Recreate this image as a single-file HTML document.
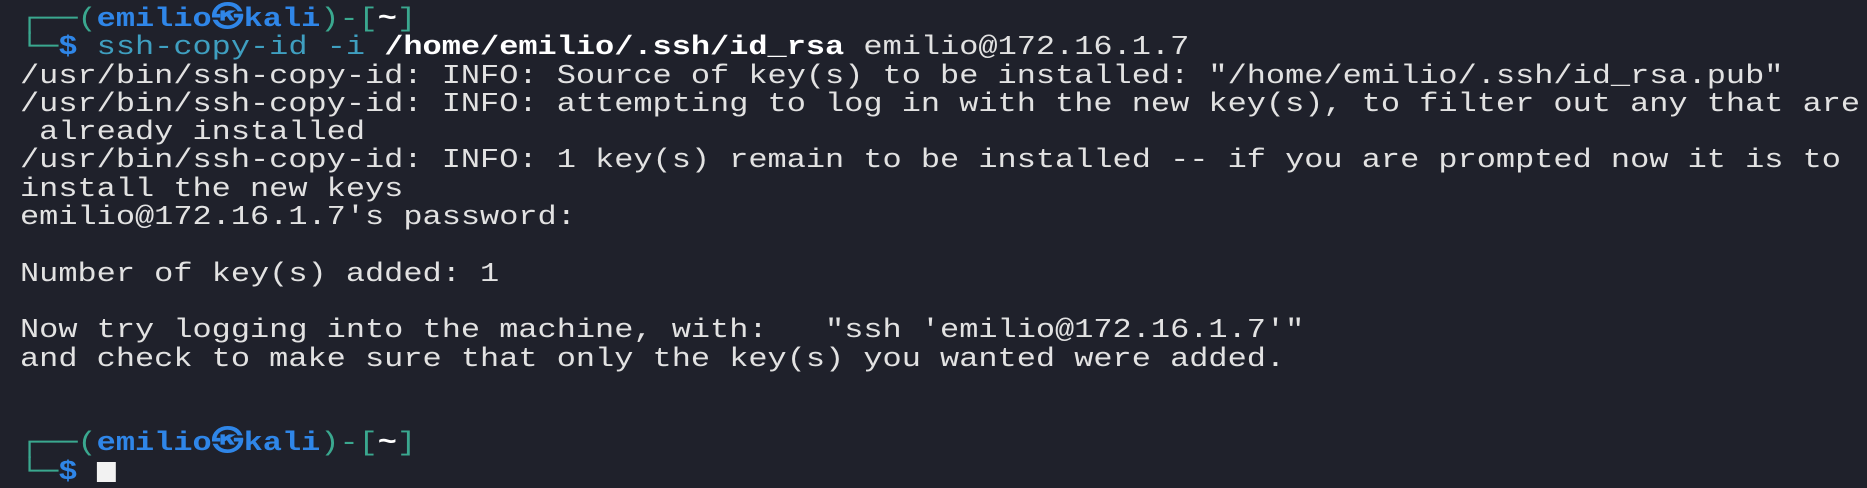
<!DOCTYPE html>
<html><head><meta charset="utf-8"><style>
html,body{margin:0;padding:0;background:#1f212b;width:1867px;height:469px;overflow:hidden}
.t{position:absolute;left:20px;top:6px;font-family:"Liberation Mono","DejaVu Sans Mono",monospace;font-size:27px;line-height:28.3px;color:#e2e2e2;white-space:pre;transform:scaleX(1.183);transform-origin:0 0}
.g{color:#3aa88f}.b{color:#2f86e8;font-weight:bold}.c{color:#3f9fc0}.w{color:#fff;font-weight:bold}
.cur{display:inline-block;width:16px;height:20px;background:#f2f2f2;vertical-align:-3px}
</style></head><body>
<div class="t"><span class="g">┌──(</span><span class="b">emilio㉿kali</span><span class="g">)-[</span><span class="w">~</span><span class="g">]</span>
<span class="g">└─</span><span class="b">$</span> <span class="c">ssh-copy-id</span> <span class="c">-i</span> <span class="w">/home/emilio/.ssh/id_rsa</span> emilio@172.16.1.7
/usr/bin/ssh-copy-id: INFO: Source of key(s) to be installed: "/home/emilio/.ssh/id_rsa.pub"
/usr/bin/ssh-copy-id: INFO: attempting to log in with the new key(s), to filter out any that are
 already installed
/usr/bin/ssh-copy-id: INFO: 1 key(s) remain to be installed -- if you are prompted now it is to
install the new keys
emilio@172.16.1.7's password: 

Number of key(s) added: 1

Now try logging into the machine, with:   "ssh 'emilio@172.16.1.7'"
and check to make sure that only the key(s) you wanted were added.


<span class="g">┌──(</span><span class="b">emilio㉿kali</span><span class="g">)-[</span><span class="w">~</span><span class="g">]</span>
<span class="g">└─</span><span class="b">$</span> <span class="cur"></span></div>
</body></html>
